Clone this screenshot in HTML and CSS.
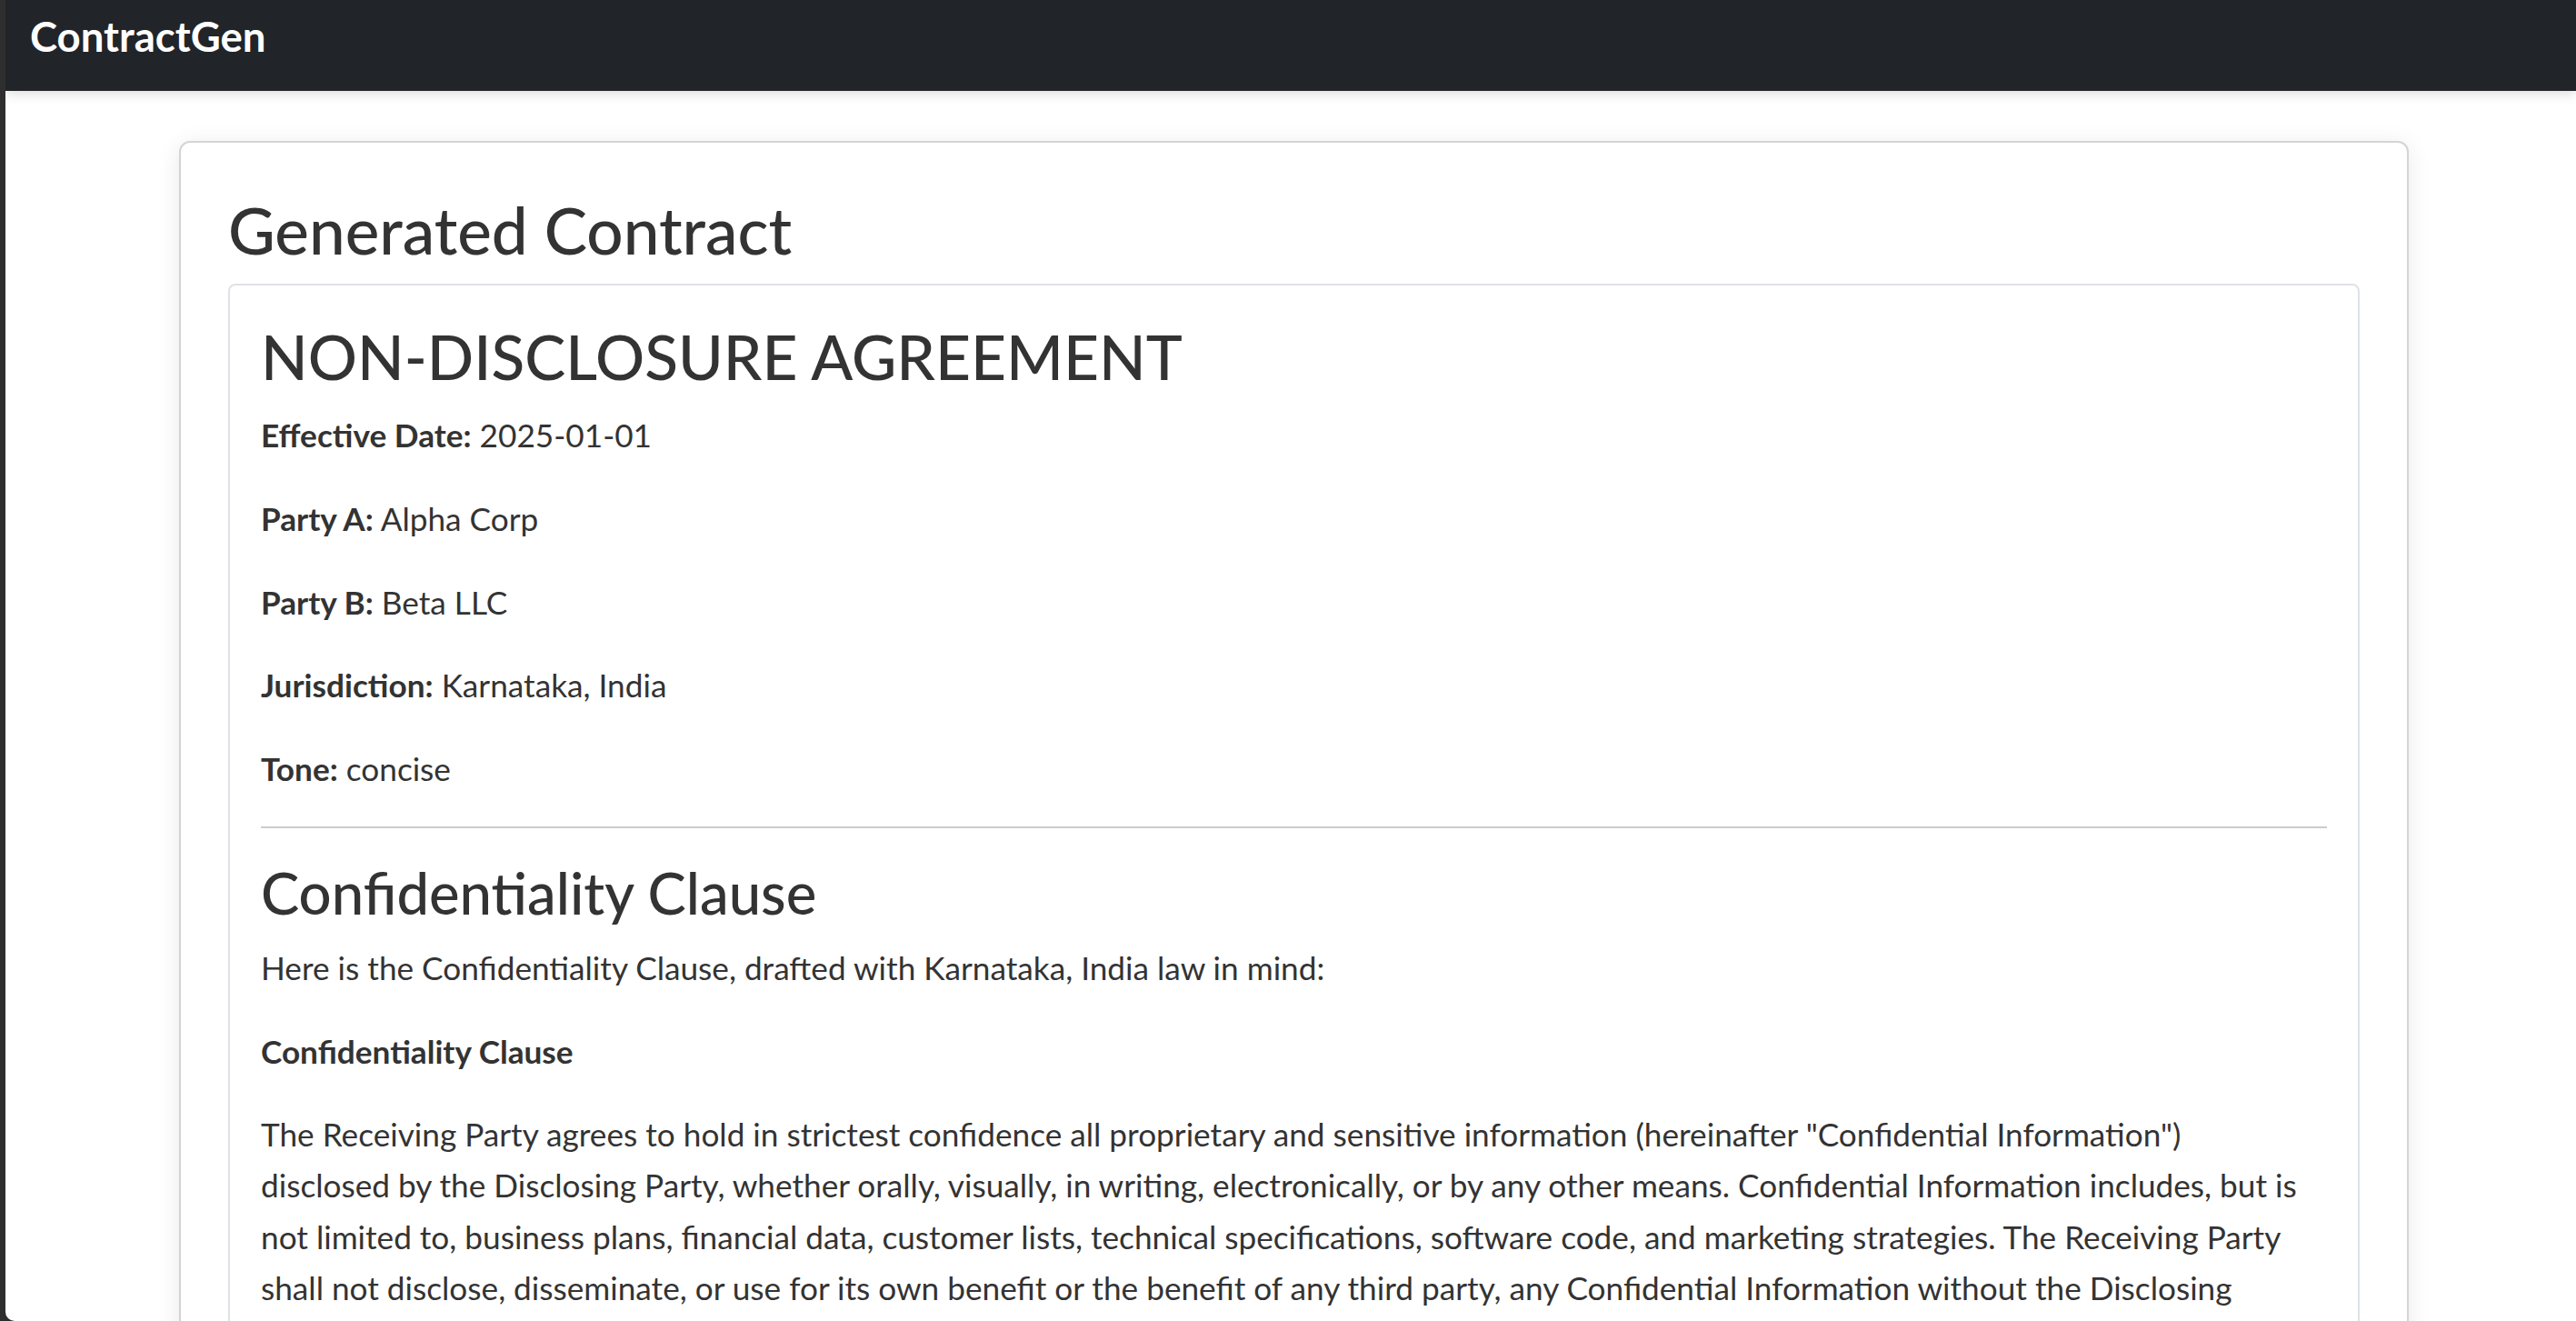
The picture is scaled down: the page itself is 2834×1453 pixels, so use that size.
FILE: index.html
```html
<!DOCTYPE html>
<html lang="en">
<head>
<meta charset="utf-8">
<title>ContractGen</title>
<link rel="stylesheet" href="styles.css">
</head>
<body>
<nav class="navbar">
  <a class="brand" href="#">ContractGen</a>
</nav>
<main class="container">
  <section class="card">
    <h2 class="card-title">Generated Contract</h2>
    <article class="contract">
      <h1 class="doc-title">NON-DISCLOSURE AGREEMENT</h1>
      <p><strong>Effective Date:</strong> 2025-01-01</p>
      <p><strong>Party A:</strong> Alpha Corp</p>
      <p><strong>Party B:</strong> Beta LLC</p>
      <p><strong>Jurisdiction:</strong> Karnataka, India</p>
      <p><strong>Tone:</strong> concise</p>
      <hr class="divider">
      <h2 class="section-title">Confidentiality Clause</h2>
      <p>Here is the Confidentiality Clause, drafted with Karnataka, India law in mind:</p>
      <p><strong>Confidentiality Clause</strong></p>
      <p>The Receiving Party agrees to hold in strictest confidence all proprietary and sensitive information (hereinafter "Confidential Information") disclosed by the Disclosing Party, whether orally, visually, in writing, electronically, or by any other means. Confidential Information includes, but is not limited to, business plans, financial data, customer lists, technical specifications, software code, and marketing strategies. The Receiving Party shall not disclose, disseminate, or use for its own benefit or the benefit of any third party, any Confidential Information without the Disclosing Party's prior written consent.</p>
    </article>
  </section>
</main>
</body>
</html>
```
FILE: styles.css
```css
html {
  height: 100%;
  background: #2e2e2e;
}

body {
  margin: 0 0 0 6px;
  height: 100vh;
  overflow: hidden;
  background: #ffffff;
  border-bottom-left-radius: 10px;
  font-family: Lato, "Liberation Sans", sans-serif;
  font-size: 35.2px;
  line-height: 56.3px;
  color: #333333;
}

.navbar {
  position: relative;
  z-index: 2;
  box-sizing: border-box;
  height: 100px;
  padding: 13px 27px 0;
  background: #212529;
  box-shadow: 0 3px 12px rgba(0, 0, 0, 0.14);
}

.brand {
  display: inline-block;
  font-size: 45.5px;
  font-weight: 700;
  line-height: 1.2;
  color: #ffffff;
  text-decoration: none;
}

.container {
  margin: 55px 184px 0 191px;
}

.card {
  border: 2px solid #d4d4d4;
  border-radius: 12px;
  padding: 53px 52px 52px;
  background: #ffffff;
  box-shadow: 0 4px 26px rgba(0, 0, 0, 0.09);
}

.card-title {
  margin: 0 0 17px;
  font-size: 71px;
  font-weight: 500;
  line-height: 1.2;
  color: #333333;
}

.contract {
  border: 2px solid #dee2e6;
  border-radius: 8px;
  padding: 37px 34px 34px;
}

.doc-title {
  margin: 0 0 18px;
  font-size: 67.6px;
  font-weight: 500;
  line-height: 1.2;
}

.contract p {
  max-width: 2251px;
  margin: 0 0 35.4px;
}

.contract strong {
  font-weight: 700;
}

.divider {
  margin: 35px 0 33px;
  border: 0;
  border-top: 2px solid #cccccc;
  height: 0;
}

.section-title {
  margin: 0 0 16px;
  font-size: 63.4px;
  font-weight: 500;
  line-height: 1.2;
}
```
